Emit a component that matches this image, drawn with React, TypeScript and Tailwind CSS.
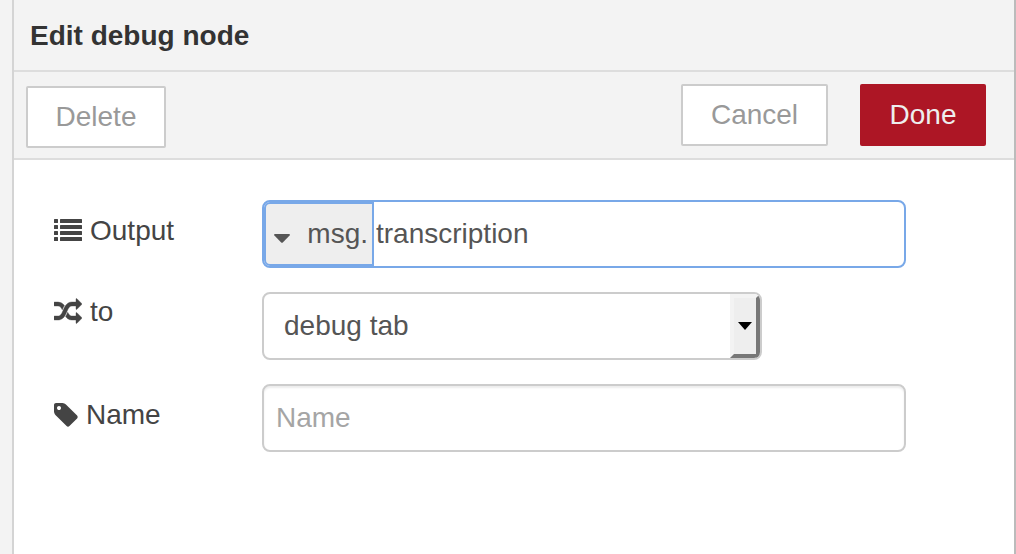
import type { ReactNode } from "react";

function ListIcon() {
  return (
    <svg viewBox="0 0 28 28" className="size-7 shrink-0" fill="currentColor" aria-hidden="true">
      {[2, 8, 14, 20].map((y) => (
        <g key={y}>
          <rect x="0" y={y} width="4" height="4" rx="0.5" />
          <rect x="6" y={y} width="22" height="4" rx="0.5" />
        </g>
      ))}
    </svg>
  );
}

function RandomIcon() {
  return (
    <svg viewBox="0 0 1792 1792" className="size-7 shrink-0" fill="currentColor" stroke="currentColor" strokeWidth="24" aria-hidden="true">
      <path d="M666 481q-60 92-137 273-22-45-37-72.5t-40.5-63.5-51-56.5-63-35-81.5-14.5h-224q-14 0-23-9t-9-23v-192q0-14 9-23t23-9h224q250 0 410 225zm1126 799q0 14-9 23l-320 320q-9 9-23 9-13 0-22.5-9.5t-9.5-22.5v-192q-32 0-85 .5t-81 1-73-1-71-5-64-10.5-63-18.5-58-28.5-59-40-55-53.5-56-69.5q59-93 136-273 22 45 37 72.5t40.5 63.5 51 56.5 63 35 81.5 14.5h256v-192q0-14 9-23t23-9q12 0 24 10l319 319q9 9 9 23zm0-896q0 14-9 23l-320 320q-9 9-23 9-13 0-22.5-9.5t-9.5-22.5v-192h-256q-48 0-87 15t-69 45-51 61.5-45 77.5q-32 62-78 171-29 66-49.5 111t-54 105-64 100-74 83-90 68.5-106.5 42-128 16.5h-224q-14 0-23-9t-9-23v-192q0-14 9-23t23-9h224q48 0 87-15t69-45 51-61.5 45-77.5q32-62 78-171 29-66 49.5-111t54-105 64-100 74-83 90-68.5 106.5-42 128-16.5h256v-192q0-14 9-23t23-9q12 0 24 10l319 319q9 9 9 23z" />
    </svg>
  );
}

function TagIcon() {
  return (
    <svg viewBox="128 0 1536 1792" className="h-7 w-6 shrink-0" fill="currentColor" aria-hidden="true">
      <path d="M576 448q0-53-37.5-90.5t-90.5-37.5-90.5 37.5-37.5 90.5 37.5 90.5 90.5 37.5 90.5-37.5 37.5-90.5zm1067 576q0 53-37 90l-491 492q-39 37-91 37-53 0-90-37l-715-716q-38-37-64.5-101t-26.5-117v-416q0-52 38-90t90-38h416q53 0 117 26.5t102 64.5l715 714q37 39 37 91z" />
    </svg>
  );
}

function Row({ id, icon, label, labelClass, children }: {
  id: string;
  icon: ReactNode;
  label: string;
  labelClass: string;
  children: ReactNode;
}) {
  return (
    <div className="flex items-start">
      <label htmlFor={id} className={`flex w-52 shrink-0 items-center gap-2 text-[#444] ${labelClass}`}>
        {icon}
        {label}
      </label>
      {children}
    </div>
  );
}

export default function App() {
  return (
    <div className="flex min-h-screen bg-[#f3f3f3] pl-3 font-['Liberation_Sans',Arial,sans-serif] text-[28px] leading-8">
      <main className="min-w-0 grow border-x-2 border-l-[#d4d4d4] border-r-[#bbb] bg-white">
        <header className="border-b-2 border-[#ddd] bg-[#f3f3f3] px-4 pt-5 pb-[18px]">
          <h1 className="font-bold text-[#333]">Edit debug node</h1>
        </header>
        <div className="flex items-start border-b-2 border-[#ddd] bg-[#f3f3f3] pt-3 pr-7 pb-2.5 pl-3">
          <button type="button" className="mt-0.5 mr-auto h-[62px] w-[140px] rounded-xs border-2 border-[#ccc] bg-white text-[#999]">
            Delete
          </button>
          <button type="button" className="mr-8 h-[62px] w-[147px] rounded-xs border-2 border-[#ccc] bg-white text-[#999]">
            Cancel
          </button>
          <button type="button" className="h-[62px] w-[126px] rounded-xs bg-[#ad1625] text-[#eee]">
            Done
          </button>
        </div>
        <form className="flex flex-col gap-6 pt-10 pr-[108px] pl-10">
          <Row id="output" icon={<ListIcon />} label="Output" labelClass="pt-[15px]">
            <div className="flex h-[68px] min-w-0 grow rounded-lg border-2 border-[#78a8e8] bg-white">
              <button
                type="button"
                className="flex w-[110px] shrink-0 items-center justify-between rounded-l-md border-2 border-[#78a8e8] bg-[#eee] pr-1 pl-2 text-[#555]"
              >
                <svg viewBox="0 0 16 9" className="mt-2 h-[9px] w-4" fill="currentColor" aria-hidden="true">
                  <path d="M1 0h14q1.500 .2.600 1.400L8.800 8.500q-.8.700-1.600 0L.4 1.400Q-.5.200 1 0z" />
                </svg>
                msg.
              </button>
              <input
                id="output"
                type="text"
                defaultValue="transcription"
                className="min-w-0 grow rounded-r-md bg-transparent pl-0.5 text-[#555] outline-none"
              />
            </div>
          </Row>
          <Row id="to" icon={<RandomIcon />} label="to" labelClass="pt-1">
            <div className="relative h-[68px] w-[500px] overflow-hidden rounded-lg border-2 border-[#ccc] bg-white">
              <select id="to" className="size-full appearance-none bg-transparent pr-10 pl-5 text-[#555] outline-none">
                <option>debug tab</option>
              </select>
              <span className="pointer-events-none absolute inset-y-0 right-0 flex w-[30px] items-center justify-center border-4 border-t-[#f3f3f3] border-r-[#777] border-b-[#777] border-l-[#f3f3f3] bg-[#eee]">
                <svg viewBox="0 0 14 8" className="h-2 w-3.5 shrink-0" fill="#000" aria-hidden="true">
                  <path d="M0 0h14L7 8z" />
                </svg>
              </span>
            </div>
          </Row>
          <Row id="name" icon={<TagIcon />} label="Name" labelClass="pt-[15px]">
            <input
              id="name"
              type="text"
              placeholder="Name"
              className="h-[68px] min-w-0 grow rounded-lg border-2 border-[#ccc] bg-white px-3 text-[#555] shadow-[inset_0_2px_2px_rgba(0,0,0,0.075)] outline-none placeholder:text-[#a5a5a5]"
            />
          </Row>
        </form>
      </main>
    </div>
  );
}
